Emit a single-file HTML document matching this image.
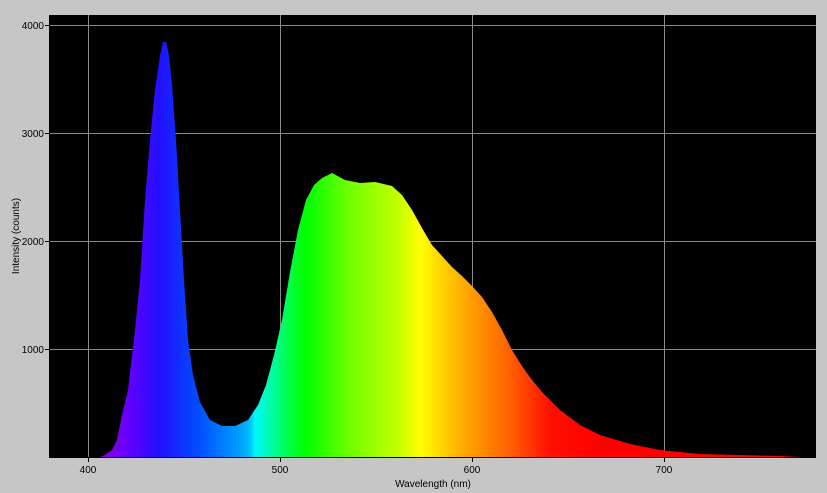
<!DOCTYPE html>
<html><head><meta charset="utf-8"><style>
html,body{margin:0;padding:0;background:#c6c6c6;}
svg{display:block}
text{font-family:"Liberation Sans",sans-serif;font-size:10px;fill:#000}
</style></head><body>
<svg width="827" height="493" viewBox="0 0 827 493">
<defs>
<linearGradient id="sp" gradientUnits="userSpaceOnUse" x1="100" y1="0" x2="600" y2="0">
<stop offset="0" stop-color="#9000e0"/>
<stop offset="0.06" stop-color="#6000ff"/>
<stop offset="0.12" stop-color="#2010ff"/>
<stop offset="0.2" stop-color="#0050ff"/>
<stop offset="0.28" stop-color="#00a0ff"/>
<stop offset="0.3" stop-color="#00c0ff"/>
<stop offset="0.31" stop-color="#00f8ff"/>
<stop offset="0.38" stop-color="#00ff40"/>
<stop offset="0.41" stop-color="#00ff00"/>
<stop offset="0.5" stop-color="#70ff00"/>
<stop offset="0.6" stop-color="#c8ff00"/>
<stop offset="0.64" stop-color="#ffff00"/>
<stop offset="0.72" stop-color="#ffb000"/>
<stop offset="0.82" stop-color="#ff6000"/>
<stop offset="0.9" stop-color="#ff1000"/>
<stop offset="1" stop-color="#ff0000"/>
</linearGradient>
</defs>
<rect x="50" y="15" width="766" height="442" fill="#000"/>
<g stroke="#8a8a8a" stroke-width="1">
<line x1="88.5" y1="15" x2="88.5" y2="457"/>
<line x1="280.5" y1="15" x2="280.5" y2="457"/>
<line x1="472.5" y1="15" x2="472.5" y2="457"/>
<line x1="664.5" y1="15" x2="664.5" y2="457"/>
<line x1="50" y1="25.5" x2="816" y2="25.5"/>
<line x1="50" y1="133.5" x2="816" y2="133.5"/>
<line x1="50" y1="241.5" x2="816" y2="241.5"/>
<line x1="50" y1="349.5" x2="816" y2="349.5"/>
</g>
<polygon fill="url(#sp)" points="100,457 105,455 112,450 117,440 122,415 128,390 135,330 140,280 145,200 150,140 155,90 160,55 163,42 166,42 169,55 172,85 176,140 180,210 184,280 188,340 193,375 200,402 210,420 222,426 235,426 248,420 258,405 266,385 274,355 282,320 290,272 298,230 306,200 314,185 322,178 332,173 345,180 360,183 375,182 392,186 402,195 412,210 422,228 432,245 442,256 452,267 462,276 472,286 482,297 492,312 502,330 512,350 522,366 532,380 542,392 560,410 580,425 600,435 630,444 660,450 700,454 780,456 800,457"/>
<g stroke="#000" stroke-width="1">
<line x1="50" y1="457.5" x2="816" y2="457.5"/>
<line x1="49.5" y1="15" x2="49.5" y2="458"/>
<line x1="45" y1="25.5" x2="50" y2="25.5"/>
<line x1="45" y1="133.5" x2="50" y2="133.5"/>
<line x1="45" y1="241.5" x2="50" y2="241.5"/>
<line x1="45" y1="349.5" x2="50" y2="349.5"/>
<line x1="88.5" y1="457" x2="88.5" y2="462"/>
<line x1="280.5" y1="457" x2="280.5" y2="462"/>
<line x1="472.5" y1="457" x2="472.5" y2="462"/>
<line x1="664.5" y1="457" x2="664.5" y2="462"/>
</g>
<text x="44" y="29" text-anchor="end">4000</text>
<text x="44" y="137" text-anchor="end">3000</text>
<text x="44" y="245" text-anchor="end">2000</text>
<text x="44" y="353" text-anchor="end">1000</text>
<text x="88" y="473" text-anchor="middle">400</text>
<text x="280" y="473" text-anchor="middle">500</text>
<text x="472" y="473" text-anchor="middle">600</text>
<text x="664" y="473" text-anchor="middle">700</text>
<text x="433" y="487" text-anchor="middle">Wavelength (nm)</text>
<text x="0" y="0" text-anchor="middle" transform="translate(19,236) rotate(-90)">Intensity (counts)</text>
</svg>
</body></html>
